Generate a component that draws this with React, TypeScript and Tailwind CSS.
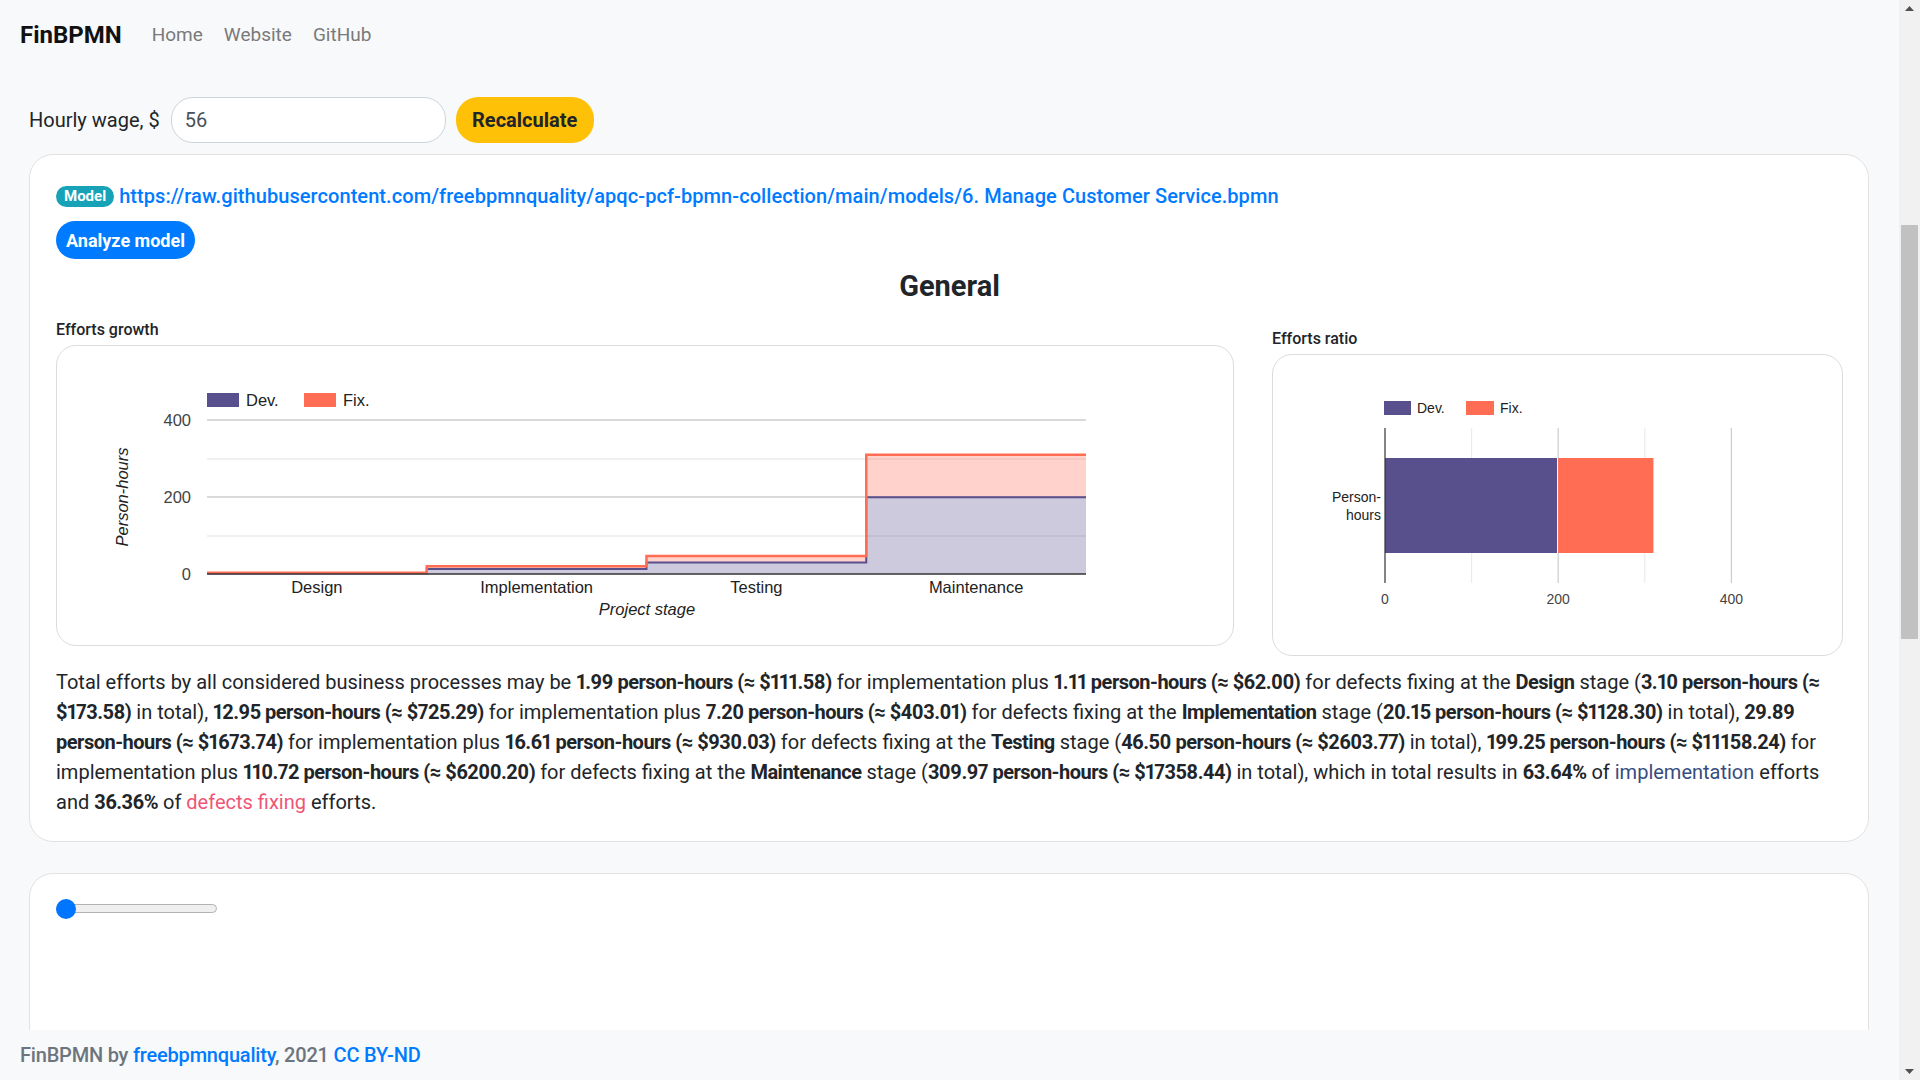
import React from "react";

const DEV = "#58508d";
const FIX = "#ff6e54";

function StepChart() {
  const x0 = 151;
  const x1 = 1030;
  const yBase = 229;
  const seg = (x1 - x0) / 4;
  const sy = (v: number) => yBase - v * 0.385;
  const dev = [1.99, 12.95, 29.89, 199.25];
  const tot = [3.1, 20.15, 46.5, 309.97];
  const fwd = (vals: number[]) =>
    vals.map((v, i) => `${x0 + seg * i} ${sy(v)} L${x0 + seg * (i + 1)} ${sy(v)}`).join(" L");
  const back = (vals: number[]) =>
    vals
      .map((v, i) => ({ v, i }))
      .reverse()
      .map(({ v, i }) => `${x0 + seg * (i + 1)} ${sy(v)} L${x0 + seg * i} ${sy(v)}`)
      .join(" L");
  const devLine = "M" + fwd(dev);
  const totLine = "M" + fwd(tot);
  const devArea = devLine + ` L${x1} ${yBase} L${x0} ${yBase} Z`;
  const fixArea = totLine + " L" + back(dev) + " Z";
  const font = "'Liberation Sans', Arial, sans-serif";
  const cats = ["Design", "Implementation", "Testing", "Maintenance"];
  return (
    <svg width="1176" height="299" viewBox="1 1 1176 299" fontFamily={font}>
      <rect x="151" y="48" width="32" height="14" fill={DEV} />
      <text x="190" y="61" fontSize="16.5" fill="#222">Dev.</text>
      <rect x="248" y="48" width="32" height="14" fill={FIX} />
      <text x="287" y="61" fontSize="16.5" fill="#222">Fix.</text>
      <line x1={x0} x2={x1} y1="75" y2="75" stroke="#cccccc" strokeWidth="1.5" />
      <line x1={x0} x2={x1} y1="114" y2="114" stroke="#ebebeb" strokeWidth="1.5" />
      <line x1={x0} x2={x1} y1="152" y2="152" stroke="#cccccc" strokeWidth="1.5" />
      <line x1={x0} x2={x1} y1="191" y2="191" stroke="#ebebeb" strokeWidth="1.5" />
      <path d={devArea} fill={DEV} fillOpacity="0.3" />
      <path d={fixArea} fill={FIX} fillOpacity="0.3" />
      <path d={devLine} fill="none" stroke={DEV} strokeWidth="2" />
      <path d={totLine} fill="none" stroke={FIX} strokeWidth="2.5" />
      <line x1={x0} x2={x1} y1={yBase} y2={yBase} stroke="#333" strokeWidth="1.5" />
      <text x="135" y="81" fontSize="16.5" fill="#444" textAnchor="end">400</text>
      <text x="135" y="158" fontSize="16.5" fill="#444" textAnchor="end">200</text>
      <text x="135" y="235" fontSize="16.5" fill="#444" textAnchor="end">0</text>
      {cats.map((c, i) => (
        <text key={c} x={x0 + seg * i + seg / 2} y="248" fontSize="16.5" fill="#222" textAnchor="middle">
          {c}
        </text>
      ))}
      <text x="591" y="270" fontSize="16.5" fill="#222" textAnchor="middle" fontStyle="italic">
        Project stage
      </text>
      <text
        x="66"
        y="152"
        fontSize="16.5"
        fill="#222"
        textAnchor="middle"
        fontStyle="italic"
        dominantBaseline="central"
        transform="rotate(-90 66 152)"
      >
        Person-hours
      </text>
    </svg>
  );
}

function BarChart() {
  const font = "'Liberation Sans', Arial, sans-serif";
  const sx = (v: number) => 112 + v * 0.866;
  return (
    <svg width="569" height="300" viewBox="0 1 569 300" fontFamily={font}>
      <rect x="111" y="47" width="27" height="14" fill={DEV} />
      <text x="144" y="59" fontSize="14" fill="#222">Dev.</text>
      <rect x="193" y="47" width="28" height="14" fill={FIX} />
      <text x="227" y="59" fontSize="14" fill="#222">Fix.</text>
      <line x1={sx(100)} x2={sx(100)} y1="74" y2="229" stroke="#ebebeb" strokeWidth="1.2" />
      <line x1={sx(200)} x2={sx(200)} y1="74" y2="229" stroke="#cccccc" strokeWidth="1.2" />
      <line x1={sx(300)} x2={sx(300)} y1="74" y2="229" stroke="#ebebeb" strokeWidth="1.2" />
      <line x1={sx(400)} x2={sx(400)} y1="74" y2="229" stroke="#cccccc" strokeWidth="1.2" />
      <rect x="112" y="104" width={sx(199.25) - 112} height="95" fill={DEV} />
      <rect x={sx(199.25)} y="104" width={sx(309.97) - sx(199.25)} height="95" fill={FIX} />
      <line x1={sx(199.25)} x2={sx(199.25)} y1="104" y2="199" stroke="#ffffff" strokeWidth="1" />
      <line x1="112" x2="112" y1="74" y2="229" stroke="#333" strokeWidth="1.2" />
      <text x="112" y="250" fontSize="14" fill="#444" textAnchor="middle">0</text>
      <text x={sx(200)} y="250" fontSize="14" fill="#444" textAnchor="middle">200</text>
      <text x={sx(400)} y="250" fontSize="14" fill="#444" textAnchor="middle">400</text>
      <text x="108" y="148" fontSize="14" fill="#222" textAnchor="end">Person-</text>
      <text x="108" y="166" fontSize="14" fill="#222" textAnchor="end">hours</text>
    </svg>
  );
}

function B({ children }: { children: React.ReactNode }) {
  return <span className="font-bold tracking-[-0.5px]">{children}</span>;
}

function Summary() {
  return (
    <div className="mt-[11px] text-[20px] leading-[30px] text-[#212529] proportional-nums">
      <div className="whitespace-nowrap">
        Total efforts by all considered business processes may be <B>1.99 person-hours (≈ $111.58)</B> for
        implementation plus <B>1.11 person-hours (≈ $62.00)</B> for defects fixing at the <B>Design</B> stage (
        <B>3.10 person-hours (≈</B>
      </div>
      <div className="whitespace-nowrap">
        <B>$173.58)</B> in total), <B>12.95 person-hours (≈ $725.29)</B> for implementation plus{" "}
        <B>7.20 person-hours (≈ $403.01)</B> for defects fixing at the <B>Implementation</B> stage (
        <B>20.15 person-hours (≈ $1128.30)</B> in total), <B>29.89</B>
      </div>
      <div className="whitespace-nowrap">
        <B>person-hours (≈ $1673.74)</B> for implementation plus <B>16.61 person-hours (≈ $930.03)</B> for defects
        fixing at the <B>Testing</B> stage (<B>46.50 person-hours (≈ $2603.77)</B> in total),{" "}
        <B>199.25 person-hours (≈ $11158.24)</B> for
      </div>
      <div className="whitespace-nowrap">
        implementation plus <B>110.72 person-hours (≈ $6200.20)</B> for defects fixing at the <B>Maintenance</B>{" "}
        stage (<B>309.97 person-hours (≈ $17358.44)</B> in total), which in total results in <B>63.64%</B> of{" "}
        <span className="text-[#374c80]">implementation</span> efforts
      </div>
      <div className="whitespace-nowrap">
        and <B>36.36%</B> of <span className="text-[#ef5675]">defects fixing</span> efforts.
      </div>
    </div>
  );
}

function Scrollbar() {
  return (
    <div className="flex h-full w-[21px] shrink-0 flex-col items-center bg-[#f1f1f1]">
      <div className="flex h-[17px] w-full items-center justify-center">
        <svg width="9" height="5" viewBox="0 0 9 5">
          <path d="M0 5 L4.5 0 L9 5 Z" fill="#505050" />
        </svg>
      </div>
      <div className="mt-[208px] h-[414px] w-[17px] bg-[#c1c1c1]" />
      <div className="flex-1" />
      <div className="flex h-[17px] w-full items-center justify-center">
        <svg width="9" height="5" viewBox="0 0 9 5">
          <path d="M0 0 L4.5 5 L9 0 Z" fill="#505050" />
        </svg>
      </div>
    </div>
  );
}

export default function App() {
  return (
    <div className="flex h-screen w-full overflow-hidden bg-[#f8f9fa] text-[#212529] [font-family:Roboto,sans-serif]">
      <div className="flex min-w-0 flex-1 flex-col">
        <nav className="flex h-[70px] shrink-0 items-center px-[20px]">
          <span className="text-[24px] font-bold text-[#111]">FinBPMN</span>
          <div className="ml-[30px] flex items-center gap-[21px] text-[19px] text-[#7a7a7a]">
            <span>Home</span>
            <span>Website</span>
            <span>GitHub</span>
          </div>
        </nav>
        <main className="min-h-0 flex-1 overflow-hidden pl-[29px] pr-[30px]">
          <div className="mt-[27px] flex h-[46px] items-center">
            <span className="text-[20px]">Hourly wage, $</span>
            <div className="ml-[11px] flex h-[46px] w-[275px] items-center rounded-[22px] border border-[#ced4da] bg-white px-[13px] text-[20px] text-[#495057]">
              56
            </div>
            <button className="ml-[10px] flex h-[46px] w-[138px] items-center justify-center rounded-[22px] bg-[#ffc107] text-[20px] font-bold text-[#212529]">
              Recalculate
            </button>
          </div>

          <div className="mt-[11px] rounded-[24px] border border-[#e2e2e2] bg-white pb-[24px] pl-[26px] pr-[25px] pt-[26px]">
            <div className="flex h-[30px] items-center gap-[5px]">
              <span className="flex h-[21px] items-center rounded-full bg-[#17a2b8] px-[8px] text-[15px] font-bold text-white">
                Model
              </span>
              <span className="text-[20px] font-medium tracking-[0.07px] text-[#007bff]">
                https://raw.githubusercontent.com/freebpmnquality/apqc-pcf-bpmn-collection/main/models/6. Manage
                Customer Service.bpmn
              </span>
            </div>
            <div className="mt-[10px]">
              <button className="flex h-[38px] w-[139px] items-center justify-center rounded-full bg-[#007bff] text-[18px] font-bold text-white">
                Analyze model
              </button>
            </div>
            <h3 className="mt-[10px] text-center text-[29px] font-bold leading-[34px] text-[#212529]">General</h3>
            <div className="mt-[15px] grid grid-cols-[1178px_1fr] gap-[38px]">
              <div>
                <div className="text-[16px] font-medium leading-[24px]">Efforts growth</div>
                <div className="mt-[3px] h-[301px] overflow-hidden rounded-[20px] border border-[#dcdcdc] bg-white">
                  <StepChart />
                </div>
              </div>
              <div className="mt-[9px]">
                <div className="text-[16px] font-medium leading-[24px]">Efforts ratio</div>
                <div className="mt-[3px] h-[302px] overflow-hidden rounded-[20px] border border-[#dcdcdc] bg-white">
                  <BarChart />
                </div>
              </div>
            </div>
            <Summary />
          </div>

          <div className="mt-[31px] h-[300px] rounded-[24px] border border-[#e2e2e2] bg-white pl-[26px] pt-[25px]">
            <div className="relative h-[20px] w-[161px]">
              <div className="absolute left-0 top-[5px] h-[9px] w-[161px] rounded-full border border-[#b3b3b3] bg-[#efefef]" />
              <div className="absolute left-0 top-0 h-[20px] w-[20px] rounded-full bg-[#0075ff]" />
            </div>
          </div>
        </main>
        <footer className="flex h-[50px] shrink-0 items-center bg-[#f8f9fa] px-[20px] text-[20px] font-medium tracking-[-0.2px] text-[#6c757d]">
          <span>
            FinBPMN by <span className="text-[#007bff]">freebpmnquality</span>, 2021{" "}
            <span className="text-[#007bff]">CC BY-ND</span>
          </span>
        </footer>
      </div>
      <Scrollbar />
    </div>
  );
}
